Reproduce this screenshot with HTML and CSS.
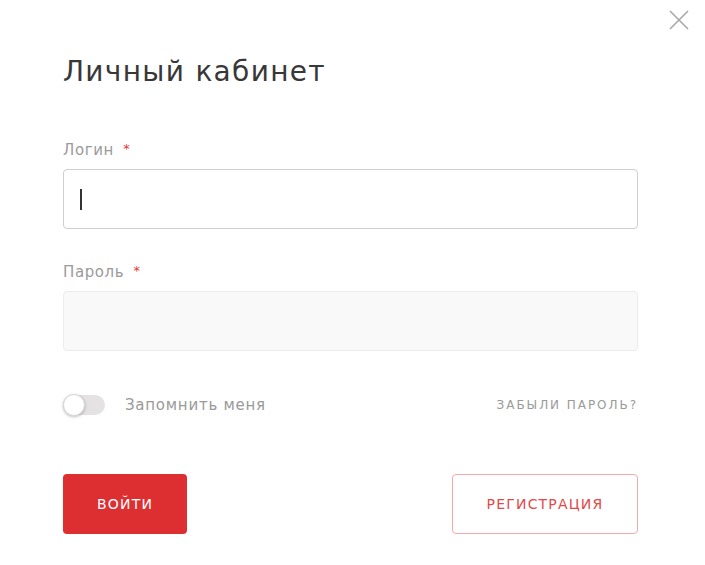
FILE: index.html
```html
<!DOCTYPE html>
<html lang="ru">
<head>
<meta charset="utf-8">
<link rel="stylesheet" href="styles.css">
</head>
<body>
<div class="modal">
  <button class="close" aria-label="Закрыть">
    <svg width="20" height="20" viewBox="0 0 20 20"><path d="M1 1L19 19M19 1L1 19" stroke="#a8a8a8" stroke-width="1.6" fill="none"/></svg>
  </button>
  <h1 class="title">Личный кабинет</h1>
  <form class="form">
    <div class="field">
      <label class="label">Логин <span class="req">*</span></label>
      <div class="input input-active"><span class="caret"></span></div>
    </div>
    <div class="field">
      <label class="label">Пароль <span class="req">*</span></label>
      <div class="input input-muted"></div>
    </div>
    <div class="row">
      <div class="remember">
        <span class="toggle"><span class="knob"></span></span>
        <span class="remember-text">Запомнить меня</span>
      </div>
      <a class="forgot">ЗАБЫЛИ ПАРОЛЬ?</a>
    </div>
    <div class="actions">
      <button type="button" class="btn btn-primary">ВОЙТИ</button>
      <button type="button" class="btn btn-outline">РЕГИСТРАЦИЯ</button>
    </div>
  </form>
</div>
</body>
</html>
```
FILE: styles.css
```css
* { box-sizing: border-box; }
html, body { margin: 0; padding: 0; background: #fff; }
body { font-family: "DejaVu Sans", "Open Sans", sans-serif; color: #333; width: 705px; height: 565px; overflow: hidden; }
.modal { position: relative; padding: 50px 67px 0 63px; }
.close { position: absolute; top: 10px; left: 669px; background: none; border: 0; padding: 0; width: 20px; height: 20px; cursor: pointer; }
.close svg { display: block; }
.title { margin: 0; font-size: 28px; font-weight: 400; line-height: 44px; color: #383838; letter-spacing: 1.3px; }
.form { margin-top: 46px; }
.field { display: flex; flex-direction: column; }
.field + .field { margin-top: 33px; }
.label { display: block; height: 20px; overflow: visible; font-size: 15px; color: #9a9a9a; line-height: 20px; margin-bottom: 9px; letter-spacing: 0.6px; }
.req { color: #e53935; margin-left: 4px; font-size: 13px; line-height: 1; vertical-align: 2px; }
.input { height: 60px; border-radius: 4px; display: flex; align-items: center; padding-left: 16px; }
.input-active { border: 1px solid #cfcfcf; background: #fff; }
.input-muted { border: 1px solid #ececec; background: #f9f9f9; }
.caret { width: 1.5px; height: 21px; background: #333; }
.row { margin-top: 42px; display: flex; justify-content: space-between; align-items: center; height: 24px; }
.remember { display: flex; align-items: center; }
.toggle { position: relative; width: 42px; height: 20px; border-radius: 10px; background: #e4e2e2; display: block; }
.knob { position: absolute; left: 0; top: -1px; width: 22px; height: 22px; border-radius: 50%; background: #fff; border: 1px solid #d8d8d8; box-shadow: 0 1px 3px rgba(0,0,0,0.25); }
.remember-text { margin-left: 20px; font-size: 15px; color: #9a9a9a; letter-spacing: 0.75px; }
.forgot { font-size: 12px; letter-spacing: 1.95px; color: #9a9a9a; text-decoration: none; }
.actions { margin-top: 57px; display: flex; justify-content: space-between; }
.btn { height: 60px; border-radius: 4px; font-family: inherit; font-size: 14px; letter-spacing: 1.2px; cursor: pointer; }
.btn-primary { width: 124px; background: #dd2f32; color: #fff; border: 0; }
.btn-outline { width: 186px; background: #fff; color: #e04a4a; border: 1px solid #f2a9a9; }
```
